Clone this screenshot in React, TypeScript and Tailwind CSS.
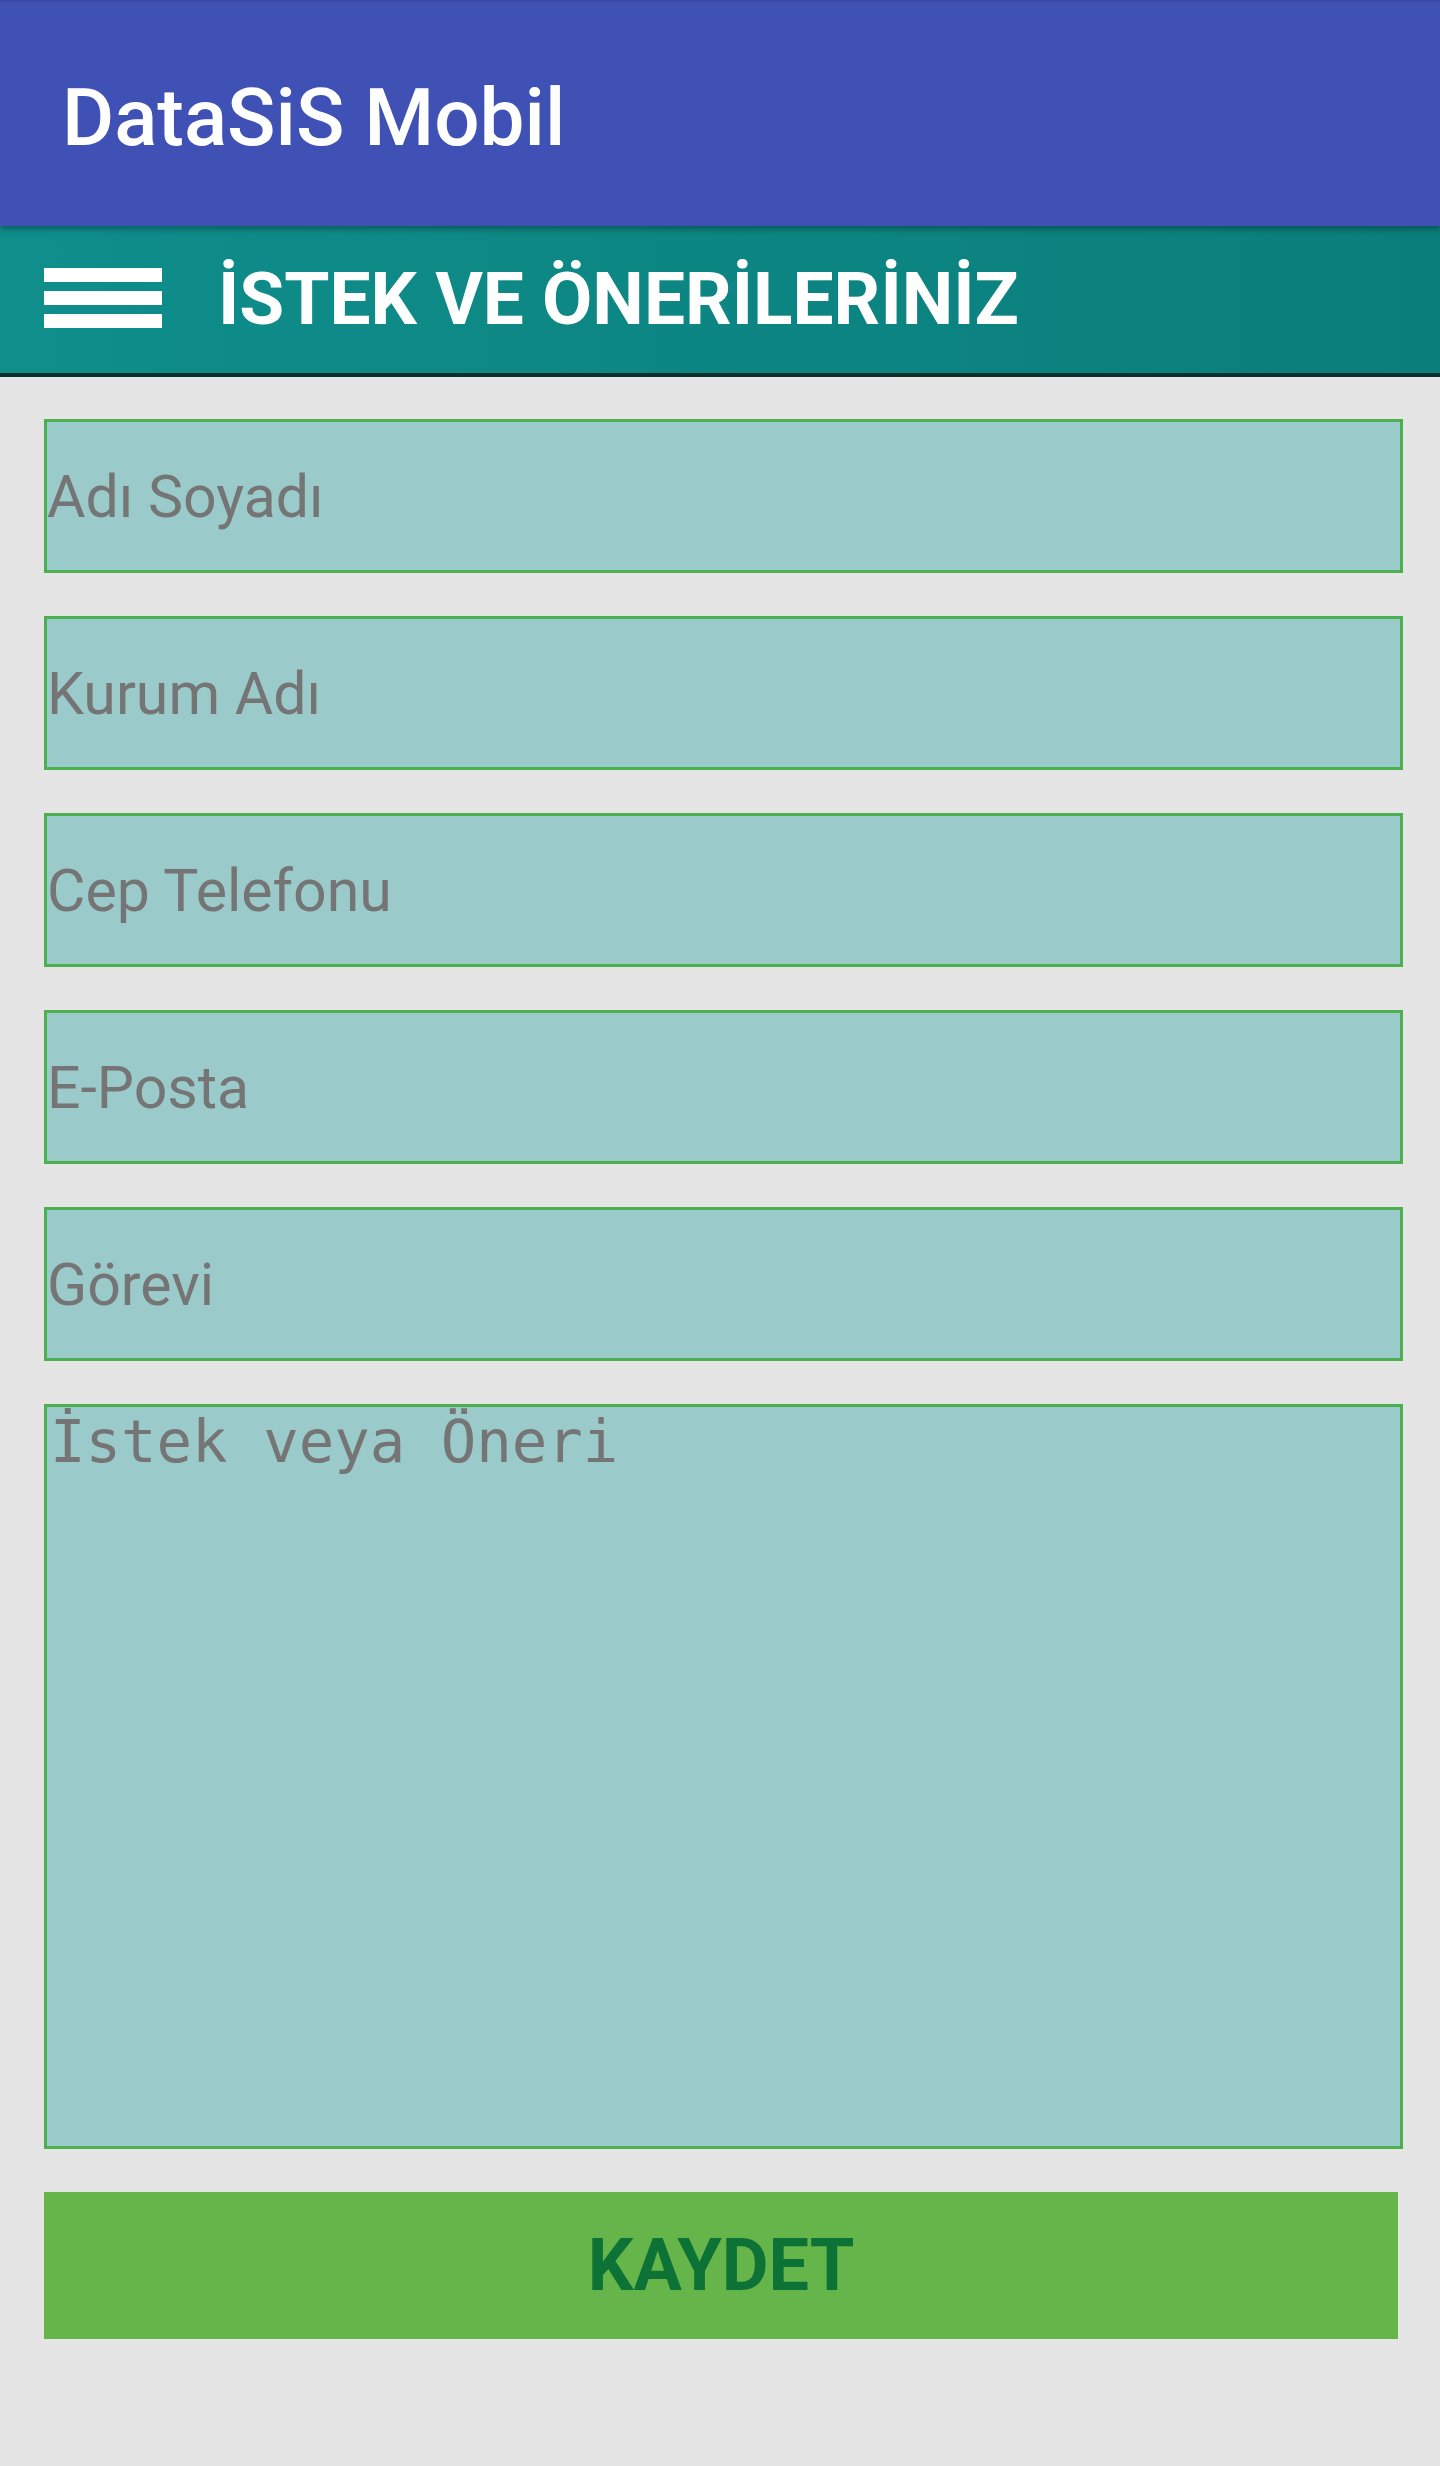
import React, { useState } from "react";

const alanlar = [
    { name: "adSoyad", placeholder: "Adı Soyadı" },
    { name: "kurum", placeholder: "Kurum Adı" },
    { name: "telefon", placeholder: "Cep Telefonu" },
    { name: "eposta", placeholder: "E-Posta" },
    { name: "gorev", placeholder: "Görevi" },
];

function App() {
    const [form, setForm] = useState<Record<string, string>>({});

    const handleChange = (e: React.ChangeEvent<HTMLInputElement | HTMLTextAreaElement>) => {
        const { name, value } = e.target;
        setForm({ ...form, [name]: value });
    };

    return (
        <div className="min-h-[2466px] bg-[#e5e5e5] font-[Roboto,sans-serif]">
            <header className="relative z-10 flex h-[226px] items-center border-t-2 border-[#3a4aa6] bg-[#3f51b5] pl-[62px] pt-[8px] shadow-[0_3px_6px_rgba(0,0,0,0.35)]">
                <h1 className="text-[80px] font-medium leading-none text-white">DataSiS Mobil</h1>
            </header>

            <div className="flex h-[151px] items-center border-b-4 border-[#0b2f2d] bg-gradient-to-r from-[#0f8e8c] to-[#0a7e7a] pl-[44px]">
                <button className="flex w-[118px] flex-col gap-[9px] pb-[4px]">
                    <span className="block h-[14px] w-full bg-white"></span>
                    <span className="block h-[14px] w-full bg-white"></span>
                    <span className="block h-[14px] w-full bg-white"></span>
                </button>
                <h2 className="ml-[56px] text-[73px] font-bold leading-none text-white">İSTEK VE ÖNERİLERİNİZ</h2>
            </div>

            <form className="flex flex-col gap-[43px] pl-[44px] pr-[37px] pt-[42px]">
                {alanlar.map((alan) => (
                    <input
                        key={alan.name}
                        type="text"
                        name={alan.name}
                        placeholder={alan.placeholder}
                        value={form[alan.name] || ""}
                        onChange={handleChange}
                        className="h-[154px] w-full border-[3px] border-[#4caf50] bg-[#9acbca] px-0 text-[59px] text-[#333] outline-none placeholder:text-[#757575]"
                    />
                ))}

                <textarea
                    name="oneri"
                    placeholder="İstek veya Öneri"
                    value={form.oneri || ""}
                    onChange={handleChange}
                    className="h-[745px] w-full resize-none border-[3px] border-[#4caf50] bg-[#9acbca] py-0 pl-[3px] pr-0 font-['DejaVu_Sans_Mono',monospace] text-[59px] leading-[70px] text-[#333] outline-none placeholder:text-[#757575]"
                />

                <button
                    type="button"
                    className="h-[147px] w-[1354px] bg-[#66b54a] text-[72px] font-bold text-[#0c7235]"
                >
                    KAYDET
                </button>
            </form>
        </div>
    );
}

export default App;
